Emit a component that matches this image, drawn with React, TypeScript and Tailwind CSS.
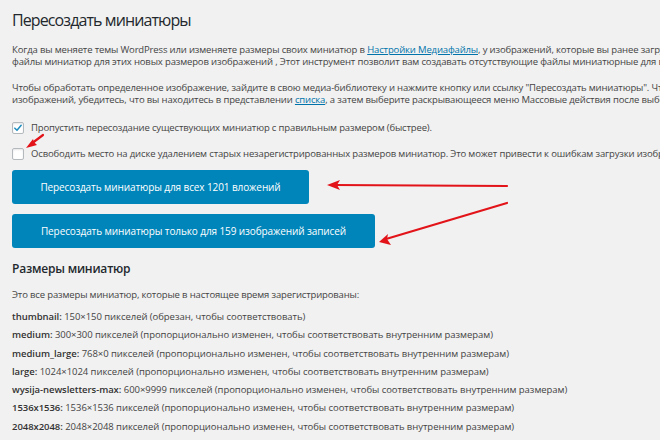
import type { ReactNode } from "react";

const sizes: { name: string; desc: string }[] = [
  { name: "thumbnail", desc: "150×150 пикселей (обрезан, чтобы соответствовать)" },
  { name: "medium", desc: "300×300 пикселей (пропорционально изменен, чтобы соответствовать внутренним размерам)" },
  { name: "medium_large", desc: "768×0 пикселей (пропорционально изменен, чтобы соответствовать внутренним размерам)" },
  { name: "large", desc: "1024×1024 пикселей (пропорционально изменен, чтобы соответствовать внутренним размерам)" },
  { name: "wysija-newsletters-max", desc: "600×9999 пикселей (пропорционально изменен, чтобы соответствовать внутренним размерам)" },
  { name: "1536x1536", desc: "1536×1536 пикселей (пропорционально изменен, чтобы соответствовать внутренним размерам)" },
  { name: "2048x2048", desc: "2048×2048 пикселей (пропорционально изменен, чтобы соответствовать внутренним размерам)" },
];

function Checkbox({ checked, children }: { checked?: boolean; children: ReactNode }) {
  return (
    <label className="flex h-[14px] items-center gap-[7px] whitespace-nowrap">
      <span className="flex h-[12px] w-[12px] shrink-0 items-center justify-center rounded-[2px] border border-[#b4b9be] bg-white shadow-[inset_0_1px_2px_rgba(0,0,0,0.1)]">
        {checked && (
          <svg viewBox="0 0 12 12" width="10" height="10" aria-hidden="true">
            <path d="M2.2 6.2 4.8 8.8 9.8 2.8" fill="none" stroke="#1e8cbe" strokeWidth="1.8" strokeLinecap="round" strokeLinejoin="round" />
          </svg>
        )}
      </span>
      <span>{children}</span>
    </label>
  );
}

function BlueButton({ width, children }: { width: string; children: ReactNode }) {
  return (
    <button
      type="button"
      className={`flex h-[34px] ${width} items-center justify-center rounded-[3px] bg-[#0085ba] text-[10px] tracking-[-0.1px] text-white`}
    >
      {children}
    </button>
  );
}

// red hand-drawn style pointers laid over the form
function Annotations() {
  return (
    <svg className="pointer-events-none absolute inset-0" width="660" height="440" aria-hidden="true">
      <g stroke="#e2141a" strokeWidth="2.2" strokeLinecap="round" fill="none">
        <path d="M43 135 L31 144" />
        <path d="M507 186 L334 185" />
        <path d="M507 203 L386 239" />
      </g>
      <g fill="#e2141a">
        <path d="M26 148 L33 139 L34 142 L37 145 Z" />
        <path d="M327 185 L340 180 L337 185 L340 190 Z" />
        <path d="M379 242 L388 234 L387 239 L391 245 Z" />
      </g>
    </svg>
  );
}

export default function App() {
  return (
    <div className="relative h-[440px] w-[660px] overflow-hidden bg-[#f1f1f1] font-['Open_Sans',sans-serif] text-[9.5px] tracking-[-0.15px] text-[#444]">
      <div className="flex flex-col px-[12px]">
        <h1 className="pt-[7px] text-[16px] leading-[26px] font-normal tracking-[-0.9px] text-[#23282d]">
          Пересоздать миниатюры
        </h1>

        <p className="mt-[11px] whitespace-nowrap leading-[12px]">
          Когда вы меняете темы WordPress или изменяете размеры своих миниатюр в{" "}
          <a className="text-[#0073aa] underline">Настройки Медиафайлы</a>, у изображений, которые вы ранее загрузили в
          свою медиатеку, будут отсутствовать
          <br />
          файлы миниатюр для этих новых размеров изображений , Этот инструмент позволит вам создавать отсутствующие
          файлы миниатюрные для всех изображений.
        </p>

        <p className="mt-[14px] whitespace-nowrap leading-[12px]">
          Чтобы обработать определенное изображение, зайдите в свою медиа-библиотеку и нажмите кнопку или ссылку
          "Пересоздать миниатюры". Чтобы обработать несколько
          <br />
          изображений, убедитесь, что вы находитесь в представлении <a className="text-[#0073aa] underline">списка</a>,
          а затем выберите раскрывающееся меню Массовые действия после выбора изображений.
        </p>

        <div className="mt-[15px] flex flex-col gap-[12px]">
          <Checkbox checked>Пропустить пересоздание существующих миниатюр с правильным размером (быстрее).</Checkbox>
          <Checkbox>
            Освободить место на диске удалением старых незарегистрированных размеров миниатюр. Это может привести к
            ошибкам загрузки изображений.
          </Checkbox>
        </div>

        <div className="mt-[9px] flex flex-col gap-[10px]">
          <BlueButton width="w-[297px]">Пересоздать миниатюры для всех 1201 вложений</BlueButton>
          <BlueButton width="w-[363px]">Пересоздать миниатюры только для 159 изображений записей</BlueButton>
        </div>

        <h2 className="mt-[12px] text-[12px] leading-[18px] font-semibold tracking-[-0.2px] text-[#23282d]">
          Размеры миниатюр
        </h2>
        <p className="mt-[10px] leading-[14px]">Это все размеры миниатюр, которые в настоящее время зарегистрированы:</p>

        <ul className="mt-[6px] flex flex-col">
          {sizes.map((s) => (
            <li key={s.name} className="whitespace-nowrap leading-[18.3px] tracking-[-0.05px]">
              <strong className="font-semibold text-[#333]">{s.name}:</strong> {s.desc}
            </li>
          ))}
        </ul>
      </div>
      <Annotations />
    </div>
  );
}
